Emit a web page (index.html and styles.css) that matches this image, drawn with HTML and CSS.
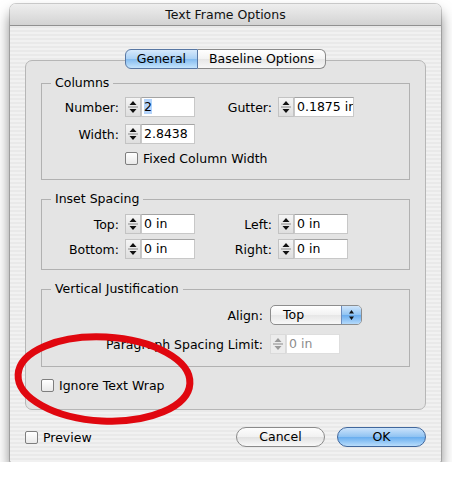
FILE: index.html
```html
<!DOCTYPE html>
<html lang="en">
<head>
    <meta charset="UTF-8">
    <title>Text Frame Options</title>
    <link rel="stylesheet" href="styles.css">
</head>
<body>
  <div class="page">
    <div class="window">
      <div class="titlebar">Text Frame Options</div>

      <div class="content">
        <div class="tabs">
          <div class="tab on">General</div>
          <div class="tab">Baseline Options</div>
        </div>

        <div class="panel">
          <fieldset class="group cols">
            <legend>Columns</legend>
            <div class="grid">
              <div class="lbl">Number:</div>
              <div class="field">
                <span class="stepper"><svg viewBox="0 0 14 18"><path d="M3.5 7 L10.5 7 L7 3 Z M3.5 11 L10.5 11 L7 15 Z"/><path class="mid" d="M2 9 H12"/></svg></span>
                <span class="input"><span class="sel">2</span></span>
              </div>
              <div class="lbl">Gutter:</div>
              <div class="field">
                <span class="stepper"><svg viewBox="0 0 14 18"><path d="M3.5 7 L10.5 7 L7 3 Z M3.5 11 L10.5 11 L7 15 Z"/><path class="mid" d="M2 9 H12"/></svg></span>
                <span class="input wide">0.1875 in</span>
              </div>

              <div class="lbl">Width:</div>
              <div class="field">
                <span class="stepper"><svg viewBox="0 0 14 18"><path d="M3.5 7 L10.5 7 L7 3 Z M3.5 11 L10.5 11 L7 15 Z"/><path class="mid" d="M2 9 H12"/></svg></span>
                <span class="input">2.8438</span>
              </div>

              <div class="check span">
                <span class="box"></span>Fixed Column Width
              </div>
            </div>
          </fieldset>

          <fieldset class="group inset">
            <legend>Inset Spacing</legend>
            <div class="grid tight">
              <div class="lbl">Top:</div>
              <div class="field">
                <span class="stepper"><svg viewBox="0 0 14 18"><path d="M3.5 7 L10.5 7 L7 3 Z M3.5 11 L10.5 11 L7 15 Z"/><path class="mid" d="M2 9 H12"/></svg></span>
                <span class="input">0 in</span>
              </div>
              <div class="lbl">Left:</div>
              <div class="field">
                <span class="stepper"><svg viewBox="0 0 14 18"><path d="M3.5 7 L10.5 7 L7 3 Z M3.5 11 L10.5 11 L7 15 Z"/><path class="mid" d="M2 9 H12"/></svg></span>
                <span class="input">0 in</span>
              </div>

              <div class="lbl">Bottom:</div>
              <div class="field">
                <span class="stepper"><svg viewBox="0 0 14 18"><path d="M3.5 7 L10.5 7 L7 3 Z M3.5 11 L10.5 11 L7 15 Z"/><path class="mid" d="M2 9 H12"/></svg></span>
                <span class="input">0 in</span>
              </div>
              <div class="lbl">Right:</div>
              <div class="field">
                <span class="stepper"><svg viewBox="0 0 14 18"><path d="M3.5 7 L10.5 7 L7 3 Z M3.5 11 L10.5 11 L7 15 Z"/><path class="mid" d="M2 9 H12"/></svg></span>
                <span class="input">0 in</span>
              </div>
            </div>
          </fieldset>

          <fieldset class="group vj">
            <legend>Vertical Justification</legend>
            <div class="vgrid">
              <div class="lbl">Align:</div>
              <div class="popup">
                <span class="value">Top</span>
                <span class="arrows"><svg viewBox="0 0 19 18"><path d="M7 7.5 L12 7.5 L9.5 4 Z M7 10.5 L12 10.5 L9.5 14 Z"/></svg></span>
              </div>

              <div class="lbl">Paragraph Spacing Limit:</div>
              <div class="field disabled">
                <span class="stepper"><svg viewBox="0 0 14 18"><path d="M3.5 7 L10.5 7 L7 3 Z M3.5 11 L10.5 11 L7 15 Z"/><path class="mid" d="M2 9 H12"/></svg></span>
                <span class="input">0 in</span>
              </div>
            </div>
          </fieldset>

          <div class="check">
            <span class="box"></span>Ignore Text Wrap
          </div>
        </div>

        <div class="footer">
          <div class="check">
            <span class="box"></span>Preview
          </div>
          <div class="buttons">
            <div class="btn">Cancel</div>
            <div class="btn ok">OK</div>
          </div>
        </div>
      </div>
    </div>

    <svg class="circle" width="452" height="478" viewBox="0 0 452 478">
      <ellipse cx="104" cy="379" rx="86" ry="42" transform="rotate(3 104 379)"/>
    </svg>
  </div>
</body>
</html>
```

FILE: styles.css
```css
*{
  margin: 0;
  padding: 0;
}

body{
  background-color: #fff;
  font-family: "DejaVu Sans", "Liberation Sans", sans-serif;
  font-size: 12.5px;
  color: #000;
}

.page{
  position: relative;
  padding: 4px 0 0 10px;
}

.window{
  width: 431px;
  height: 458px;
  box-sizing: border-box;
  display: flex;
  flex-direction: column;
  border-radius: 6px 6px 2px 2px;
  background: repeating-linear-gradient(#f1f1f1 0 2px, #e9e9e9 2px 4px);
  box-shadow: 0 0 0 1px rgba(0,0,0,0.18), 0 9px 14px rgba(0,0,0,0.5);
}

.titlebar{
  height: 22px;
  box-sizing: border-box;
  border-bottom: 1px solid #919191;
  border-radius: 6px 6px 0 0;
  background: linear-gradient(#eeeeee, #d3d3d3);
  text-align: center;
  line-height: 21px;
  color: #111;
}

.content{
  padding: 23px 15px 0;
}

/* segmented tab control */
.tabs{
  display: flex;
  justify-content: center;
  position: relative;
  z-index: 1;
  margin-bottom: -9px;
}

.tab{
  height: 20px;
  box-sizing: border-box;
  padding: 0 11px;
  line-height: 18px;
  border: 1px solid #8a8a8a;
  background: linear-gradient(#ffffff, #f3f3f3 50%, #e6e6e6 51%, #f7f7f7);
}

.tab:first-child{
  border-radius: 6px 0 0 6px;
}

.tab:last-child{
  border-radius: 0 6px 6px 0;
  border-left: none;
}

.tab.on{
  border-color: #5877a3;
  background: linear-gradient(#d6e9fc, #a9d0f5 50%, #84bbef 51%, #c6e5fd);
}

.panel{
  height: 350px;
  box-sizing: border-box;
  padding: 14px 15px 0;
  border: 1px solid #b6b6b6;
  border-radius: 7px;
  background-color: #e4e4e4;
}

/* group boxes */
.group{
  margin: 0 0 11px;
  padding: 6px 0 13px;
  border: 1px solid #b1b1b1;
  min-width: 0;
}

.group legend{
  margin-left: 9px;
  padding: 0 4px;
  line-height: 16px;
}

.inset{
  padding: 7px 0 10px;
}

.vj{
  padding: 8px 0 12px;
}

.grid{
  display: grid;
  grid-template-columns: 77px 70px 71px auto;
  column-gap: 6px;
  row-gap: 7px;
  align-items: center;
}

.grid.tight{
  row-gap: 5px;
}

.vgrid{
  display: grid;
  grid-template-columns: 221px auto;
  column-gap: 7px;
  row-gap: 9px;
  align-items: center;
}

.lbl{
  text-align: right;
  white-space: nowrap;
}

.field{
  display: flex;
  height: 20px;
}

.stepper{
  width: 16px;
  height: 20px;
  box-sizing: border-box;
  border: 1px solid #c3c3c3;
  background: linear-gradient(#f5f5f5, #dedede);
}

.stepper svg{
  display: block;
  width: 14px;
  height: 18px;
  fill: #111;
}

.stepper .mid{
  stroke: #8a8a8a;
  stroke-width: 1;
}

.input{
  width: 54px;
  height: 20px;
  box-sizing: border-box;
  padding: 0 2px;
  border: 1px solid #c8c8c8;
  border-top-color: #a4a4a4;
  background-color: #fff;
  line-height: 18px;
  white-space: nowrap;
  overflow: hidden;
}

.input.wide{
  width: 60px;
}

.sel{
  background-color: #b4d4fb;
}

.disabled .stepper{
  border-color: #dadada;
  background: #ececec;
}

.disabled .stepper svg{
  fill: #9a9a9a;
}

.disabled .input{
  color: #8c8c8c;
  border-color: #dedede;
}

.span{
  grid-column: 2 / span 3;
}

.check{
  display: flex;
  align-items: center;
  gap: 5px;
  white-space: nowrap;
}

.box{
  width: 13px;
  height: 13px;
  box-sizing: border-box;
  border: 1px solid #7e7e7e;
  border-radius: 2px;
  background: linear-gradient(#ffffff, #e9e9e9);
}

/* popup menu */
.popup{
  width: 92px;
  height: 20px;
  box-sizing: border-box;
  display: flex;
  border: 1px solid #8d8d8d;
  border-radius: 5px;
  background: linear-gradient(#ffffff, #f2f2f2 50%, #e6e6e6 51%, #f8f8f8);
}

.popup .value{
  flex: 1;
  padding-left: 12px;
  line-height: 18px;
}

.popup .arrows{
  width: 19px;
  border-left: 1px solid #6c8cbd;
  border-radius: 0 4px 4px 0;
  background: linear-gradient(#cfe5fb, #8fc3f2 50%, #69acee 51%, #b5dafb);
}

.popup svg{
  display: block;
  width: 19px;
  height: 18px;
  fill: #111;
}

/* bottom row */
.footer{
  display: flex;
  align-items: center;
  height: 20px;
  margin-top: 17px;
}

.buttons{
  display: flex;
  gap: 12px;
  margin-left: auto;
}

.btn{
  width: 89px;
  height: 20px;
  box-sizing: border-box;
  border: 1px solid #8a8a8a;
  border-radius: 10px;
  background: linear-gradient(#fdfdfd, #f1f1f1 50%, #e1e1e1 51%, #f9f9f9);
  text-align: center;
  line-height: 18px;
}

.btn.ok{
  border-color: #41679c;
  background: linear-gradient(#cbe3fb, #8ec2f2 50%, #68adef 51%, #b9ddfb);
}

/* red marker ring drawn over the dialog */
.circle{
  position: absolute;
  top: 0;
  left: 0;
  pointer-events: none;
}

.circle ellipse{
  fill: none;
  stroke: #e0070f;
  stroke-width: 7;
}
```
